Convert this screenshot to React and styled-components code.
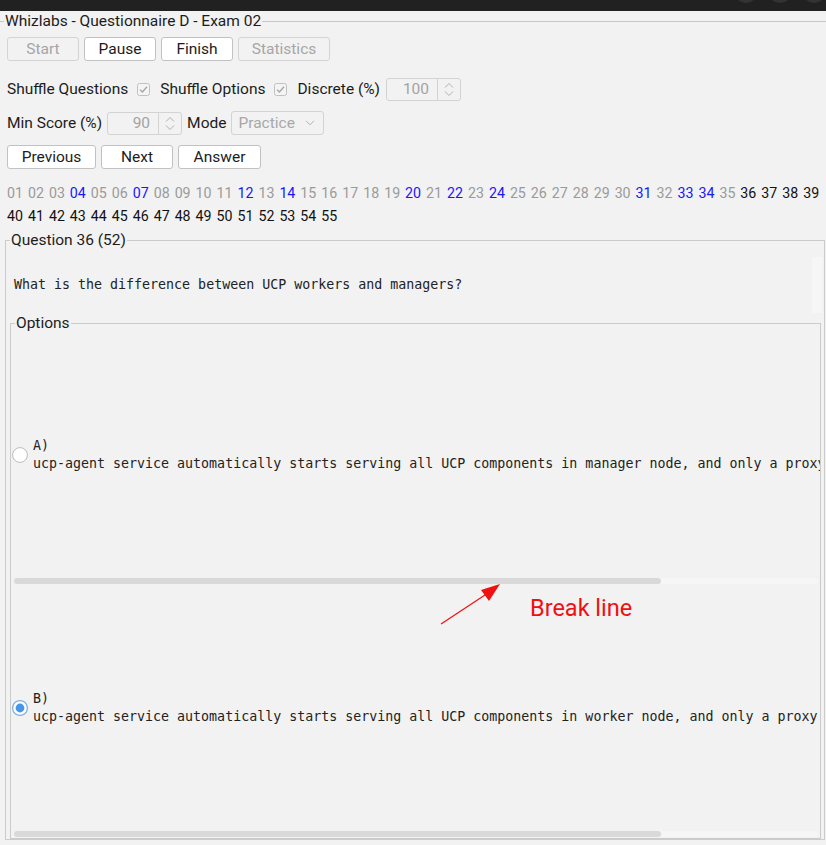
import React from "react";
import styled, { createGlobalStyle } from "styled-components";

const GlobalStyle = createGlobalStyle`
  html, body { margin: 0; padding: 0; }
  body {
    background: #f2f2f2;
    font-family: Roboto, "Noto Sans", sans-serif;
    font-size: 15.5px;
    color: #1c1c1c;
  }
`;

const mono = `"DejaVu Sans Mono", "Liberation Mono", monospace`;

const Page = styled.div`
  position: relative;
  width: 826px;
  height: 845px;
  overflow: hidden;
  background: #f2f2f2;
`;

const TitleBar = styled.div`
  height: 11px;
  background: #212121;
  display: flex;
  justify-content: flex-end;
  gap: 10px;
  overflow: hidden;
`;

const WinDot = styled.span`
  flex: none;
  width: 24px;
  height: 24px;
  margin-top: -21px;
  border-radius: 50%;
  background: #333;
`;

const Frame = styled.fieldset`
  margin: 2px 0 0 0;
  padding: 0;
  border: none;
  border-top: 1px solid #c8c8c8;
  min-width: 0;
`;

const Legend = styled.legend`
  margin-left: ${({ $offset }) => $offset}px;
  padding: 0 1px;
  line-height: 17px;
  font-size: 15.5px;
`;

const Controls = styled.div`
  display: flex;
  flex-direction: column;
  gap: 10px;
  padding: 7px 3px 0 7px;
`;

const Row = styled.div`
  display: flex;
  align-items: center;
  gap: ${({ $gap }) => $gap || 6}px;
  height: 24px;
  margin-top: ${({ $top }) => $top || 0}px;
`;

const Button = styled.button`
  box-sizing: border-box;
  width: ${({ $w }) => $w}px;
  height: 24px;
  padding: 0;
  font: inherit;
  border-radius: 3px;
  border: 1px solid ${({ disabled }) => (disabled ? "#d4d4d4" : "#c2c2c2")};
  background: ${({ disabled }) => (disabled ? "#f2f2f2" : "#ffffff")};
  color: ${({ disabled }) => (disabled ? "#a6a6a6" : "#1c1c1c")};
`;

const Label = styled.span`
  white-space: nowrap;
`;

const Check = styled.svg`
  flex: none;
  margin: 0 4px 0 3px;
`;

const Spinner = styled.div`
  box-sizing: border-box;
  display: flex;
  width: 75px;
  height: 23px;
  border: 1px solid #d3d3d3;
  border-radius: 3px;
`;

const SpinValue = styled.span`
  flex: 1;
  text-align: right;
  padding-right: 8px;
  line-height: 21px;
  color: #a3a3a3;
`;

const SpinArrows = styled.span`
  width: 22px;
  border-left: 1px solid #d3d3d3;
  display: flex;
  align-items: center;
  justify-content: center;
`;

const Combo = styled.div`
  box-sizing: border-box;
  display: flex;
  align-items: center;
  justify-content: space-between;
  width: 93px;
  height: 24px;
  padding: 0 8px 0 6px;
  border: 1px solid #d3d3d3;
  border-radius: 3px;
  color: #a8a8a8;
`;

const Numbers = styled.div`
  display: flex;
  flex-wrap: wrap;
  column-gap: 5px;
  line-height: 23px;
  font-size: 14.2px;
  margin-top: 3px;
`;

const numColor = { gray: "#9a9a9a", blue: "#1616ff", black: "#111111" };

const Num = styled.span`
  color: ${({ $state }) => numColor[$state]};
`;

const Group = styled.fieldset`
  margin: ${({ $m }) => $m};
  padding: 0;
  border: 1px solid #cbcbcb;
  min-width: 0;
`;

const QuestionRow = styled.div`
  display: flex;
  align-items: center;
  height: 56px;
  margin-top: 8px;
`;

const QuestionText = styled.div`
  flex: 1;
  padding-left: 8px;
  padding-bottom: 2px;
  font-family: ${mono};
  font-size: 13.3px;
  color: #222;
  white-space: pre;
`;

const VTrack = styled.div`
  align-self: stretch;
  width: 10px;
  margin-right: 2px;
  background: #f6f6f6;
`;

const OptionPane = styled.div`
  display: flex;
  flex-direction: column;
  height: 253px;
`;

const Viewport = styled.div`
  flex: 1;
  display: flex;
  align-items: center;
  gap: 5px;
  padding-left: 1px;
  overflow: hidden;
`;

const OptionText = styled.div`
  font-family: ${mono};
  font-size: 13.3px;
  line-height: 18px;
  color: #222;
  white-space: pre;
`;

const HBar = styled.div`
  height: 6px;
  margin: 1px 2px 1px 3px;
  border-radius: 3px;
  background: #f6f6f6;
`;

const HThumb = styled.div`
  height: 100%;
  border-radius: 3px;
  background: #d9d9d9;
`;

const Annotation = styled.div`
  position: absolute;
  left: 530px;
  top: 594px;
  font-size: 23.5px;
  line-height: 28px;
  color: #f01010;
`;

const ArrowLayer = styled.svg`
  position: absolute;
  left: 0;
  top: 0;
  pointer-events: none;
`;

const CheckIcon = () => (
  <Check width="13" height="13" viewBox="0 0 13 13">
    <rect x="0.5" y="0.5" width="12" height="12" rx="2" fill="#f4f4f4" stroke="#c0c0c0" />
    <path d="M3 6.6 L5.4 9 L10 3.8" fill="none" stroke="#a4a4a4" strokeWidth="1.3" />
  </Check>
);

const SpinBox = ({ value }) => (
  <Spinner>
    <SpinValue>{value}</SpinValue>
    <SpinArrows>
      <svg width="10" height="15" viewBox="0 0 10 15">
        <path d="M1 5.5 L5 1.5 L9 5.5 M1 9.5 L5 13.5 L9 9.5" fill="none" stroke="#b0b0b0" strokeWidth="1" />
      </svg>
    </SpinArrows>
  </Spinner>
);

const Radio = ({ checked }) => (
  <svg width="16" height="16" viewBox="0 0 16 16" style={{ flex: "none" }}>
    <circle cx="8" cy="8" r="7.4" fill="#fff" stroke={checked ? "#86b1e6" : "#bcbcbc"} strokeWidth={checked ? 1.3 : 1} />
    {checked && <circle cx="8" cy="8" r="4.4" fill="#4995e6" />}
  </svg>
);

const blue = [4, 7, 12, 14, 20, 22, 24, 31, 33, 34];
const numbers = Array.from({ length: 55 }, (_, i) => {
  const n = i + 1;
  return {
    label: String(n).padStart(2, "0"),
    state: n >= 36 ? "black" : blue.includes(n) ? "blue" : "gray",
  };
});

const options = [
  {
    key: "A",
    checked: false,
    text: "ucp-agent service automatically starts serving all UCP components in manager node, and only a proxy service in worker node",
    thumb: 647,
  },
  {
    key: "B",
    checked: true,
    text: "ucp-agent service automatically starts serving all UCP components in worker node, and only a proxy service in manager node",
    thumb: 647,
  },
];

export default function App() {
  return (
    <Page>
      <GlobalStyle />
      <TitleBar>
        <WinDot />
        <WinDot />
        <WinDot />
      </TitleBar>
      <Frame>
        <Legend $offset={4}>Whizlabs - Questionnaire D - Exam 02</Legend>
        <Controls>
          <Row $gap={5}>
            <Button $w={72} disabled>Start</Button>
            <Button $w={72}>Pause</Button>
            <Button $w={72}>Finish</Button>
            <Button $w={92} disabled>Statistics</Button>
          </Row>
          <Row $top={6}>
            <Label>Shuffle Questions</Label>
            <CheckIcon />
            <Label>Shuffle Options</Label>
            <CheckIcon />
            <Label>Discrete (%)</Label>
            <SpinBox value="100" />
          </Row>
          <Row $gap={5}>
            <Label>Min Score (%)</Label>
            <SpinBox value="90" />
            <Label>Mode</Label>
            <Combo>
              <span>Practice</span>
              <svg width="10" height="6" viewBox="0 0 10 6">
                <path d="M1 0.8 L5 4.8 L9 0.8" fill="none" stroke="#b0b0b0" strokeWidth="1" />
              </svg>
            </Combo>
          </Row>
          <Row $gap={5}>
            <Button $w={89}>Previous</Button>
            <Button $w={72}>Next</Button>
            <Button $w={83}>Answer</Button>
          </Row>
          <Numbers>
            {numbers.map((n) => (
              <Num key={n.label} $state={n.state}>{n.label}</Num>
            ))}
          </Numbers>
        </Controls>
        <Group $m="4px 1px 0 5px">
          <Legend $offset={4}>Question 36 (52)</Legend>
          <QuestionRow>
            <QuestionText>What is the difference between UCP workers and managers?</QuestionText>
            <VTrack />
          </QuestionRow>
          <Group $m="2px 3px 0 4px">
            <Legend $offset={4}>Options</Legend>
            {options.map((o) => (
              <OptionPane key={o.key}>
                <Viewport>
                  <Radio checked={o.checked} />
                  <OptionText>
                    {o.key + ")"}
                    {"\n"}
                    {o.text}
                  </OptionText>
                </Viewport>
                <HBar>
                  <HThumb style={{ width: o.thumb }} />
                </HBar>
              </OptionPane>
            ))}
          </Group>
        </Group>
      </Frame>
      <Annotation>Break line</Annotation>
      <ArrowLayer width="826" height="845" viewBox="0 0 826 845">
        <line x1="441" y1="624" x2="488" y2="593" stroke="#f01010" strokeWidth="1.2" />
        <polygon points="500,584 481,590 489,601" fill="#f01010" />
      </ArrowLayer>
    </Page>
  );
}
